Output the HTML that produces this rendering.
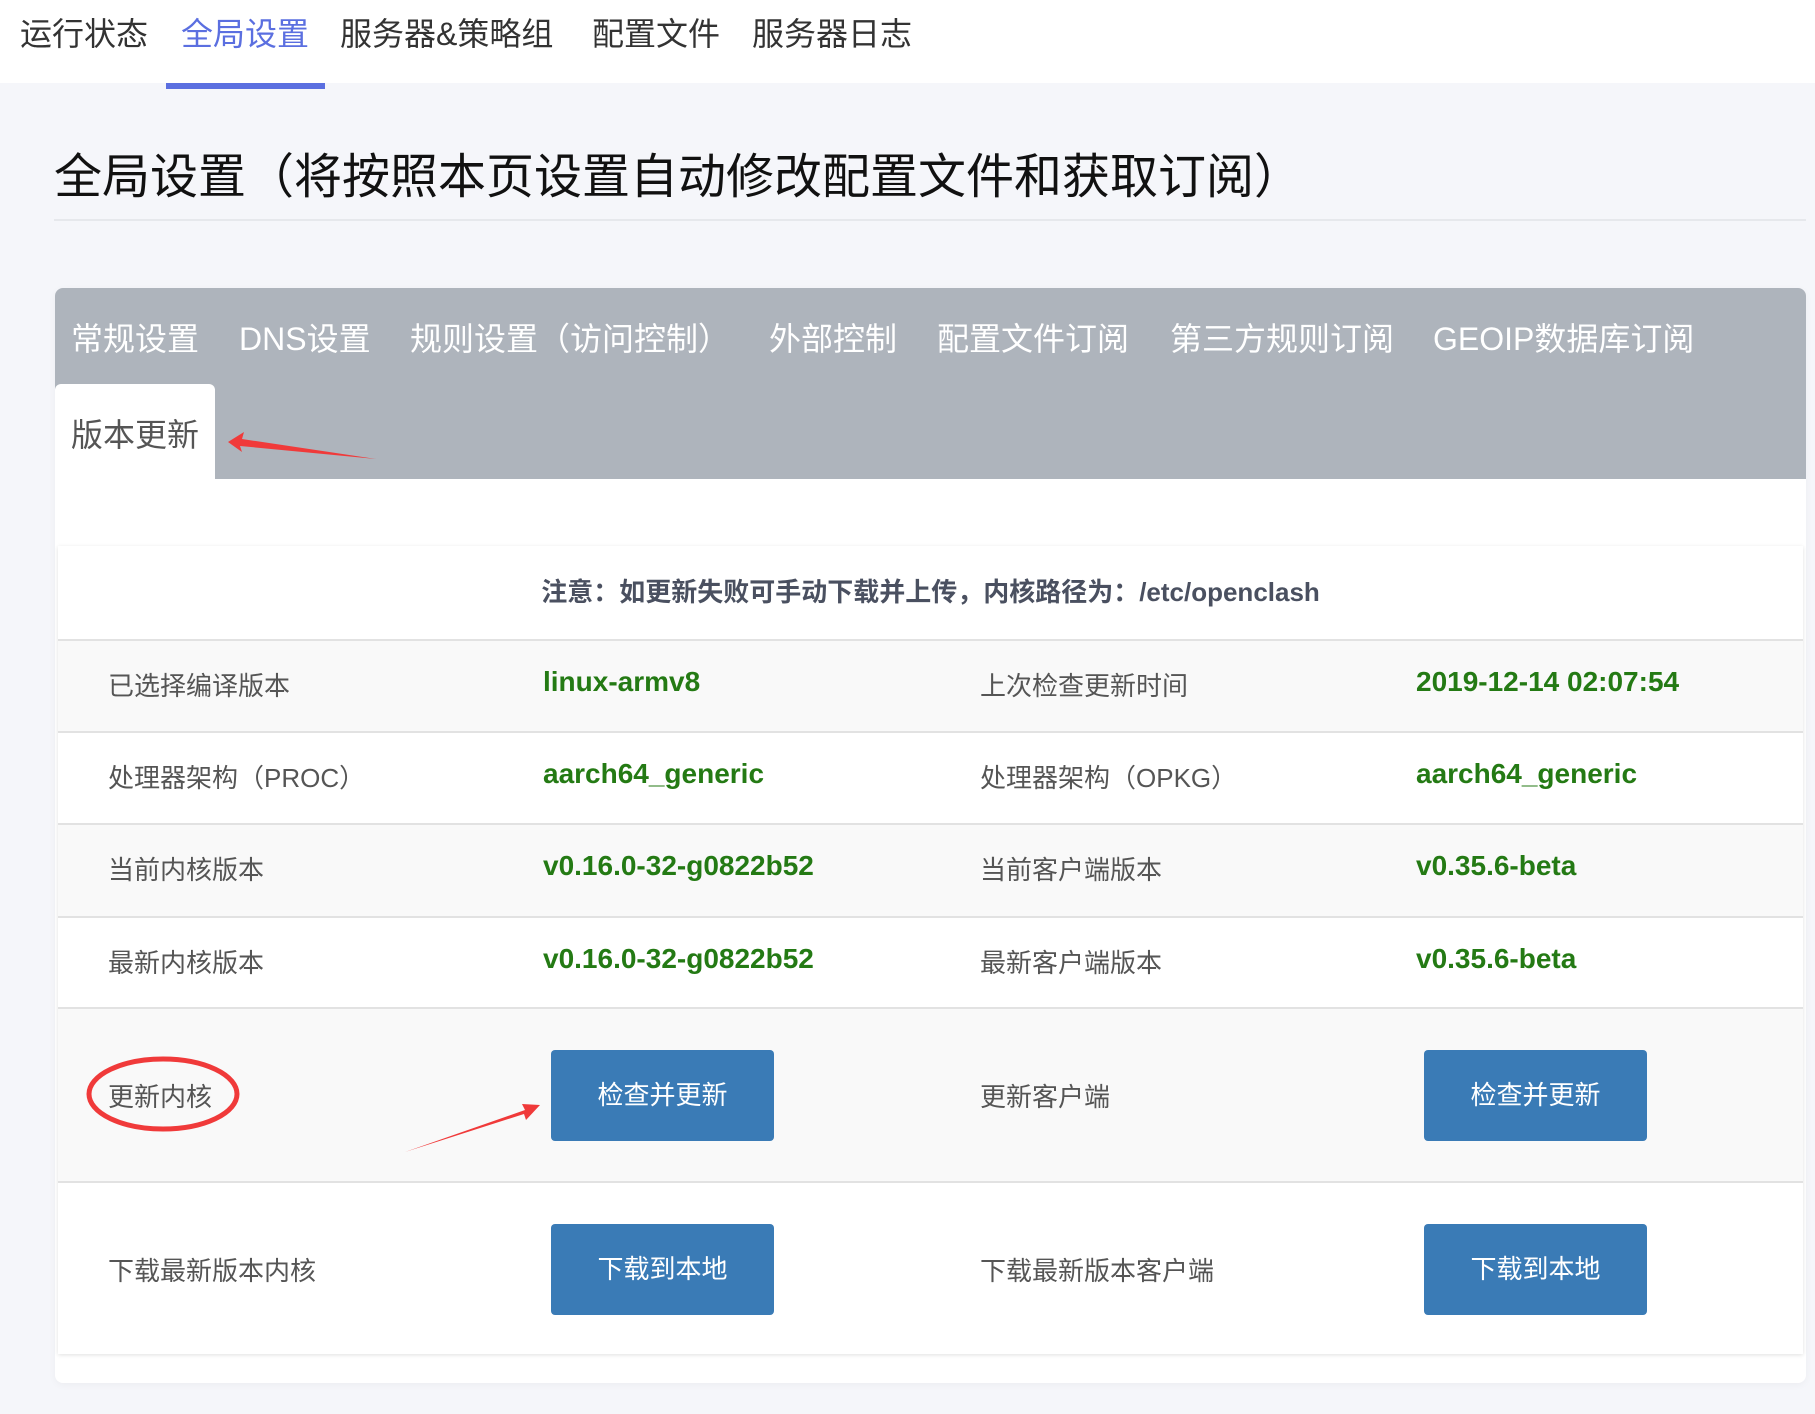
<!DOCTYPE html>
<html><head><meta charset="utf-8"><style>
*{margin:0;padding:0;box-sizing:border-box}
body{width:1815px;height:1414px;background:#f5f6fa;font-family:"Liberation Sans","Noto Sans CJK SC",sans-serif;position:relative;overflow:hidden}
.nav{position:absolute;left:0;top:0;width:1815px;height:83px;background:#fff}
.nav span{position:absolute;top:9px;font-size:32px;color:#333}
.ul{position:absolute;left:166px;top:83px;width:159px;height:6px;background:#5b6fe0}
h1{position:absolute;left:54px;top:137px;font-size:48px;font-weight:normal;color:#111;white-space:nowrap}
.hr{position:absolute;left:54px;top:219px;width:1752px;height:2px;background:#e6e8ec}
.wrap{position:absolute;left:55px;top:288px;width:1751px;height:1095px;background:#fff;border-radius:8px;box-shadow:0 2px 8px rgba(0,0,0,.04)}
.bar{position:absolute;left:0;top:0;width:1751px;height:191px;background:#aeb4bc;border-radius:8px 8px 0 0}
.bar span{position:absolute;top:26px;font-size:32px;color:#fff;white-space:nowrap}
.act{position:absolute;left:0;top:96px;width:160px;height:95px;background:#fff;border-radius:6px 6px 0 0}
.act span{position:absolute;left:16px;top:26px;font-size:32px;color:#555}
.card{position:absolute;left:58px;top:546px;width:1745px;height:808px;background:#fff;box-shadow:0 1px 4px rgba(0,0,0,.12)}
.row{position:absolute;left:0;width:1745px;border-top:2px solid #e2e2e2}
.g{background:#f9f9f9}
.row span{position:absolute;font-size:26px;white-space:nowrap}
.l{color:#555}
.row span.v{color:#247a14;font-weight:bold;font-size:28px}
.btn{position:absolute;width:223px;height:91px;background:#3a7bb6;border-radius:4px;color:#fff;font-size:26px;text-align:center;line-height:91px}
</style></head><body>
<div class="nav">
<span style="left:20px">运行状态</span>
<span style="left:181px;color:#5b6fe0">全局设置</span>
<span style="left:340px">服务器&amp;策略组</span>
<span style="left:592px">配置文件</span>
<span style="left:752px">服务器日志</span>
</div>
<div class="ul"></div>
<h1>全局设置（将按照本页设置自动修改配置文件和获取订阅）</h1>
<div class="hr"></div>
<div class="wrap">
<div class="bar">
<span style="left:16px">常规设置</span>
<span style="left:184px">DNS设置</span>
<span style="left:355px">规则设置（访问控制）</span>
<span style="left:714px">外部控制</span>
<span style="left:882px">配置文件订阅</span>
<span style="left:1115px">第三方规则订阅</span>
<span style="left:1378px">GEOIP数据库订阅</span>
<div class="act"><span>版本更新</span></div>
</div>
</div>
<div class="card">
<div style="position:absolute;left:0;top:0;width:1745px;height:93px;text-align:center;line-height:93px;font-size:26px;font-weight:bold;color:#4a5060">注意：如更新失败可手动下载并上传，内核路径为：/etc/openclash</div>
<div class="row g" style="top:93px;height:92px"><span class="l" style="left:50px;top:25px">已选择编译版本</span><span class="v" style="left:485px;top:25px">linux-armv8</span><span class="l" style="left:922px;top:25px">上次检查更新时间</span><span class="v" style="left:1358px;top:25px">2019-12-14 02:07:54</span></div>
<div class="row" style="top:185px;height:92px"><span class="l" style="left:50px;top:25px">处理器架构（PROC）</span><span class="v" style="left:485px;top:25px">aarch64_generic</span><span class="l" style="left:922px;top:25px">处理器架构（OPKG）</span><span class="v" style="left:1358px;top:25px">aarch64_generic</span></div>
<div class="row g" style="top:277px;height:93px"><span class="l" style="left:50px;top:25px">当前内核版本</span><span class="v" style="left:485px;top:25px">v0.16.0-32-g0822b52</span><span class="l" style="left:922px;top:25px">当前客户端版本</span><span class="v" style="left:1358px;top:25px">v0.35.6-beta</span></div>
<div class="row" style="top:370px;height:91px"><span class="l" style="left:50px;top:25px">最新内核版本</span><span class="v" style="left:485px;top:25px">v0.16.0-32-g0822b52</span><span class="l" style="left:922px;top:25px">最新客户端版本</span><span class="v" style="left:1358px;top:25px">v0.35.6-beta</span></div>
<div class="row g" style="top:461px;height:174px"><span class="l" style="left:50px;top:68px">更新内核</span><div class="btn" style="left:493px;top:41px">检查并更新</div><span class="l" style="left:922px;top:68px">更新客户端</span><div class="btn" style="left:1366px;top:41px">检查并更新</div></div>
<div class="row" style="top:635px;height:173px"><span class="l" style="left:50px;top:68px">下载最新版本内核</span><div class="btn" style="left:493px;top:41px">下载到本地</div><span class="l" style="left:922px;top:68px">下载最新版本客户端</span><div class="btn" style="left:1366px;top:41px">下载到本地</div></div>
</div>
<svg style="position:absolute;left:0;top:0" width="1815" height="1414">
<polygon points="376,459 240,446 242,452 228,442 244,432 242,439" fill="#f03a3a"/>
<ellipse cx="163" cy="1094" rx="74" ry="35" fill="none" stroke="#f03a3a" stroke-width="5"/>
<polygon points="405,1152 525,1110 522,1104 540,1105 526,1120 524,1114" fill="#f03a3a"/>
</svg>
</body></html>
